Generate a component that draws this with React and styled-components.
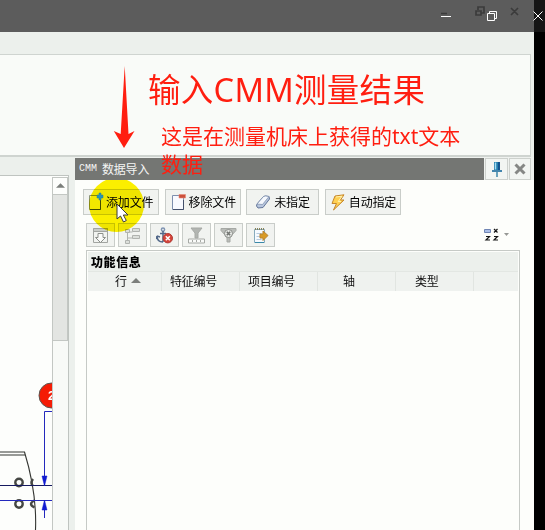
import React from 'react';
import styled, { createGlobalStyle } from 'styled-components';

const Global = createGlobalStyle`
  body { margin: 0; background: #000; overflow: hidden; }
  * { box-sizing: border-box; }
`;
const Window = styled.div`
  position: relative; width: 545px; height: 530px; overflow: hidden;
  display: flex; flex-direction: column; background: #000; color: #111;
  font: 12px/16px "Noto Sans CJK SC", sans-serif;
`;
const TitleBar = styled.header`
  height: 32px; flex: none;
  background: linear-gradient(90deg, #5c5c5c 534px, #161616 534px);
`;
const Workspace = styled.main`
  width: 534px; flex: 1; display: flex; flex-direction: column; background: #ecf0ec;
`;
const Ribbon = styled.section`
  margin: 22px 3px 0 0; height: 103px; flex: none; background: #f9fbf8;
  border: solid #cfd4d0; border-width: 1px 1px 2px 0;
`;
const Columns = styled.div`
  flex: 1; display: flex; min-height: 0;
`;
const Viewer = styled.section`
  width: 69px; margin-top: 18px; display: flex; background: #fdfefc;
  border: solid #bfc4c0; border-width: 1px 1px 0 0;
`;
const Canvas = styled.div`
  width: 52px; overflow: hidden;
`;
const ScrollBar = styled.div`
  width: 16px; display: flex; flex-direction: column; padding-top: 1px;
`;
const ScrollUp = styled.div`
  height: 18px; border: 1px solid #c3c7c3; display: flex; align-items: center; justify-content: center;
`;
const Track = styled.div`
  height: 146px; background: #e3e5e2; border: solid #c3c7c3; border-width: 0 1px 1px;
`;
const Thumb = styled.div`
  flex: 1; background: #f8faf7; border: solid #c3c7c3; border-width: 0 0 0 1px;
`;
const Dock = styled.section`
  margin-left: 6px; flex: 1; display: flex; flex-direction: column; background: #fdfefb;
`;
const DockHeader = styled.div`
  height: 23px; padding: 1px 3px 0 0; display: flex; gap: 1px; flex: none; background: #eef1ee;
`;
const DockTitle = styled.div`
  position: relative; z-index: 2; width: 409px; background: #747673; color: #f4f5f4;
  display: flex; align-items: center; padding-left: 4px; line-height: 20px; letter-spacing: -0.2px;
`;
const Short = styled.span`
  width: 23px; font: 10px/20px "Liberation Mono", monospace; letter-spacing: 0;
`;
const HeaderButton = styled.div`
  width: ${(p) => p.$w}px; border: 1px solid #cdd1cd; background: #f2f5f2;
  display: flex; align-items: center; justify-content: center;
`;
const FileActions = styled.div`
  display: flex; padding: 9px 0 0 8px; gap: 5.6px; height: 35px; flex: none;
`;
const Action = styled.div`
  width: ${(p) => p.$w}px; height: 26px; padding-left: ${(p) => p.$pad}px;
  border: 1px solid #c9cdc9; background: #f1f3f0; display: flex; align-items: center; gap: ${(p) => p.$gap}px;
  color: #000; white-space: nowrap; letter-spacing: -0.15px;
  svg { flex: none; }
`;
const Tools = styled.div`
  display: flex; align-items: flex-start; height: 34px; gap: 3px; padding: 8px 24px 0 11px; flex: none;
`;
const Tool = styled.div`
  width: 29px; height: 24px; border: 1px solid #c9cdc9; background: #f1f3f0;
  display: flex; align-items: center; justify-content: center;
`;
const SortMode = styled.div`
  margin-left: auto; padding-top: 5px; height: 22px;
`;
const Table = styled.div`
  margin: 1px 14px 0 11px; flex: 1; border: solid #c6cac6; border-width: 1px 1px 0 1px;
  padding: 1px 1px 0; background: #fdfefb;
`;
const Band = styled.div`
  height: 19px; background: #ecf0ec; padding-left: 3px; font-weight: 900; letter-spacing: 0.6px; line-height: 19px; color: #000;
`;
const HeadRow = styled.div`
  display: grid; grid-template-columns: 74px repeat(4, 78px) 1fr; height: 20px;
  background: #eff2ef; border-top: 1px solid #e3e7e3;
`;
const Head = styled.div`
  border-right: 1px solid #e1e5e1; display: flex; align-items: center; gap: 4px;
  padding-left: ${(p) => p.$pad}px; white-space: nowrap; line-height: 16px; padding-bottom: 2px; letter-spacing: -0.25px;
  &:last-child { border: 0; }
`;
const Notes = styled.div`
  position: absolute; z-index: 4; left: 148px; top: 70px; color: #ff1e10; white-space: nowrap;
  font-family: "Noto Sans", "Noto Sans CJK SC", sans-serif;
`;
const NoteTitle = styled.div`
  font-size: 32.5px; line-height: 40px; letter-spacing: 0.3px;
`;
const NoteText = styled.div`
  margin: 12px 0 0 13px; font-size: 21px; line-height: 28px;
`;
const Overlay = styled.svg`
  position: absolute; z-index: ${(p) => p.$z}; left: ${(p) => p.$x}px; top: ${(p) => p.$y}px; overflow: visible;
`;
const Spot = styled.div`
  position: absolute; z-index: 1; left: 89px; top: 178px; width: 55px; height: 54px;
  border-radius: 50%; background: #fdf000; mix-blend-mode: multiply; filter: blur(0.6px);
`;

const FileIcon = ({ remove }) => (
  <svg width="17" height="18" viewBox="0 0 17 18">
    <path d="M1.5 2.5h9l2 2v12h-11z" fill={remove ? '#f8faff' : '#f5f7e8'} stroke={remove ? '#7d8fae' : '#8b9478'} />
    <path d="M2 16.5h10.5V7" fill="none" stroke="#43506b" />
    {remove && <path d="M8 1.5h6.5v3.5H8z" fill="#cc513c" stroke="#e58b78" strokeWidth=".6" />}
  </svg>
);
const Eraser = () => (
  <svg width="16" height="16" viewBox="0 0 16 16">
    <path d="M2 10 8.5 2.5Q10 1.5 14 2.5L14.5 5 8 13.5 3 14 1.5 12z" fill="#b7c5dc" stroke="#63769a" />
    <path d="M2 10 8.5 2.5Q10 1.5 14 2.5L7.5 10.5z" fill="#f5f8fd" stroke="#7a8cac" strokeWidth=".7" />
  </svg>
);
const Bolt = () => (
  <svg width="15" height="17" viewBox="0 0 15 17">
    <path d="M4 2 13 .8 9.5 6H13L2.5 16 5.5 9.5H1z" fill="#ffd052" stroke="#c5862c" />
    <path d="m5 3 6-.8L7.2 7.5H10" fill="none" stroke="#fff3b0" />
  </svg>
);
const Pin = () => (
  <svg width="12" height="17" viewBox="0 0 12 17">
    <path d="M3 1h6v8H3z" fill="#247fae" /><path d="M4.5 1.5v7" stroke="#a6def1" strokeWidth="1.5" />
    <path d="M8 1v8" stroke="#0c4583" strokeWidth="1.5" /><path d="M1 10h10" stroke="#176a9c" strokeWidth="1.6" />
    <path d="M6 11v5" stroke="#307fa4" strokeWidth="1.4" />
  </svg>
);
const Cross = () => (
  <svg width="12" height="12" viewBox="0 0 12 12"><path d="m1.5 1.5 9 9M10.5 1.5l-9 9" stroke="#858785" strokeWidth="3" /></svg>
);
const Up = ({ w = 10 }) => <svg width={w} height="6" viewBox="0 0 10 6"><path d="m0 5 5-5 5 5z" fill="#7b7e7b" /></svg>;

const toolDrawings = [
  <g key="a" fill="none" stroke="#a2a5a1"><path d="M1 1h15v4H1z" fill="#c9ccc8" stroke="none" /><path d="M1.5 1.5h14v14h-14zM1.5 4.5h14" /><path d="M6 6.5h5v4h2.5l-5 5-5-5H6z" fill="#fafbf9" stroke="#8c8f8b" /></g>,
  <g key="b" fill="none" stroke="#b0b3af"><path d="M3.5 5v10M3.5 5h5M3.5 11h5" /><path d="M1.5 2.5h4v3h-4zM8.5 1.5h7v3h-7zM8.5 8.5h7v3h-7zM1.5 13.5h4v3h-4z" fill="#dcdfdb" /></g>,
  <g key="c" fill="none" stroke="#526889" strokeWidth="1.5"><circle cx="7" cy="2.6" r="1.6" stroke="#7f94b2" /><path d="M7 4v11M4 6.5h6M1 9q0 6 6 6M1 9l-1 3M1 9l3 1" /><circle cx="11.8" cy="11.2" r="4.7" fill="#d5443a" stroke="#b13a34" strokeWidth="1" /><path d="m9.8 9.2 4 4M13.8 9.2l-4 4" stroke="white" /></g>,
  <g key="d" fill="#b2b5b1" stroke="#a6a9a5"><path d="M3 1h11l-4 5v5H7V6z" /><path d="M.5 12h16v4H.5z" fill="#fafbf9" /><path d="M4.5 13v2M8.5 13v2M12.5 13v2" /></g>,
  <g key="e" fill="#b9bcb8" stroke="#a6a9a5"><path d="M1 1.5h15v2L12 8l-2 3v4H7v-4L5 8 1 3.5z" /><circle cx="8.5" cy="6.5" r="4" fill="#e6e8e5" stroke="#8b8e8a" /><path d="m6.8 4.8 3.4 3.4M10.2 4.8 6.8 8.2" stroke="#737672" strokeWidth="1.6" /></g>,
  <g key="f"><path d="M2.5 2.5h10v13h-10z" fill="#f6faff" stroke="#86aabd" /><path d="M3 2h9" stroke="#85825a" strokeWidth="2" strokeDasharray="1 1" /><path d="M4.5 6.5h5M4.5 9.5h4M4.5 12.5h5" stroke="#b6cadd" /><path d="M8 7h3V4l5 4.5-5 5V11H8z" fill="#d89a25" stroke="#b98532" /><path d="M3 15.5h9" stroke="#3989a8" /></g>,
];

const Drawing = () => (
  <svg width="52" height="354" viewBox="0 176 52 354">
    <circle cx="51.5" cy="395.5" r="12.5" fill="#f51c05" stroke="#595650" />
    <text x="48" y="400" fill="#fff" fontFamily="Liberation Sans" fontSize="12" fontWeight="bold">2</text>
    <g fill="none" stroke="#343632" strokeWidth="1.1">
      <path d="M0 452h24.5Q37 493 35.5 530M0 455h25.2" />
      <g strokeWidth="2.4" stroke="#454743"><circle cx="19" cy="482.5" r="3.7" /><circle cx="19" cy="504" r="3.7" /><path d="M33 479q-3 4 0 7M34.5 500.5q-7 3.5 0 7" /></g>
    </g>
    <g fill="none" stroke="#2429bd"><path d="M52 411.5h-7.5V485M0 500.5h52M44.5 501v17" /><path d="M0 485.5h52" stroke="#15195f" /></g>
    <path d="m42 476 2.5 10 2.5-10zM42 510l2.5-10 2.5 10z" fill="#111bd0" stroke="#111bd0" strokeWidth=".5" />
  </svg>
);

export default function App() {
  return (
    <Window>
      <Global />
      <TitleBar />
      <Workspace>
        <Ribbon />
        <Columns>
          <Viewer>
            <Canvas><Drawing /></Canvas>
            <ScrollBar><ScrollUp><Up w={9} /></ScrollUp><Track /><Thumb /></ScrollBar>
          </Viewer>
          <Dock>
            <DockHeader>
              <DockTitle><Short>CMM</Short>数据导入</DockTitle>
              <HeaderButton $w={23}><Pin /></HeaderButton>
              <HeaderButton $w={22}><Cross /></HeaderButton>
            </DockHeader>
            <FileActions>
              <Action $w={76} $pad={4} $gap={1}><FileIcon />添加文件</Action>
              <Action $w={76} $pad={5} $gap={1}><FileIcon remove />移除文件</Action>
              <Action $w={73} $pad={8} $gap={3}><Eraser />未指定</Action>
              <Action $w={76} $pad={5} $gap={3}><Bolt />自动指定</Action>
            </FileActions>
            <Tools>
              {toolDrawings.map((drawing, i) => <Tool key={i}><svg width="17" height="17" viewBox="0 0 17 17">{drawing}</svg></Tool>)}
              <SortMode>
                <svg width="27" height="16" viewBox="0 0 27 16">
                  <path d="M1.5 1.5h6v3h-6z" fill="#abbfe9" stroke="#7085b3" />
                  <g fill="none" stroke="#171717" strokeWidth="1.2"><path d="m11 1 3.5 3.5M14.5 1 11 4.5M3 8.5h3.5L3 12h4M11 8.5h3.5L11 12h4" /></g>
                  <path d="M21 5h5l-2.5 3z" fill="#969895" />
                </svg>
              </SortMode>
            </Tools>
            <Table>
              <Band>功能信息</Band>
              <HeadRow>
                <Head $pad={27}>行<Up /></Head>
                <Head $pad={8}>特征编号</Head>
                <Head $pad={8}>项目编号</Head>
                <Head $pad={25}>轴</Head>
                <Head $pad={19}>类型</Head>
                <Head />
              </HeadRow>
            </Table>
          </Dock>
        </Columns>
      </Workspace>
      <Overlay $z={3} $x={440} $y={6} width="105" height="20">
        <g fill="none" stroke="#3b3b3b" strokeWidth="1.7"><path d="M1 7.5h6M38 4V1h6v6h-3M36 5h5v4h-5zM71 2l7 7M78 2l-7 7" /></g>
        <g fill="none" stroke="#fff"><path d="M1 10.5h10M47.5 7.5h7v7h-7zM49.5 7V5.5h7v7H55M93.5 5.5l9 9M102.5 5.5l-9 9" /></g>
      </Overlay>
      <Spot />
      <Overlay $z={3} $x={97} $y={193} width="6" height="7">
        <path d="M2 0h2v2h2v3H4v2H2V5H0V2h2z" fill="#2795b4" stroke="#287a8c" strokeWidth=".5" />
      </Overlay>
      <Overlay $z={4} $x={113} $y={66} width="22" height="84">
        <path d="M11.7 0 15.5 68 21.5 65 11 82 .8 65 7.7 68z" fill="#ff1e10" />
      </Overlay>
      <Notes>
        <NoteTitle>输入CMM测量结果</NoteTitle>
        <NoteText>这是在测量机床上获得的txt文本<br />数据</NoteText>
      </Notes>
      <Overlay $z={5} $x={116} $y={203} width="13" height="20">
        <path d="M1 1v15l3.5-3 3 6 2.8-1.5-3-5.5H12z" fill="#fff" stroke="#393939" />
      </Overlay>
    </Window>
  );
}
